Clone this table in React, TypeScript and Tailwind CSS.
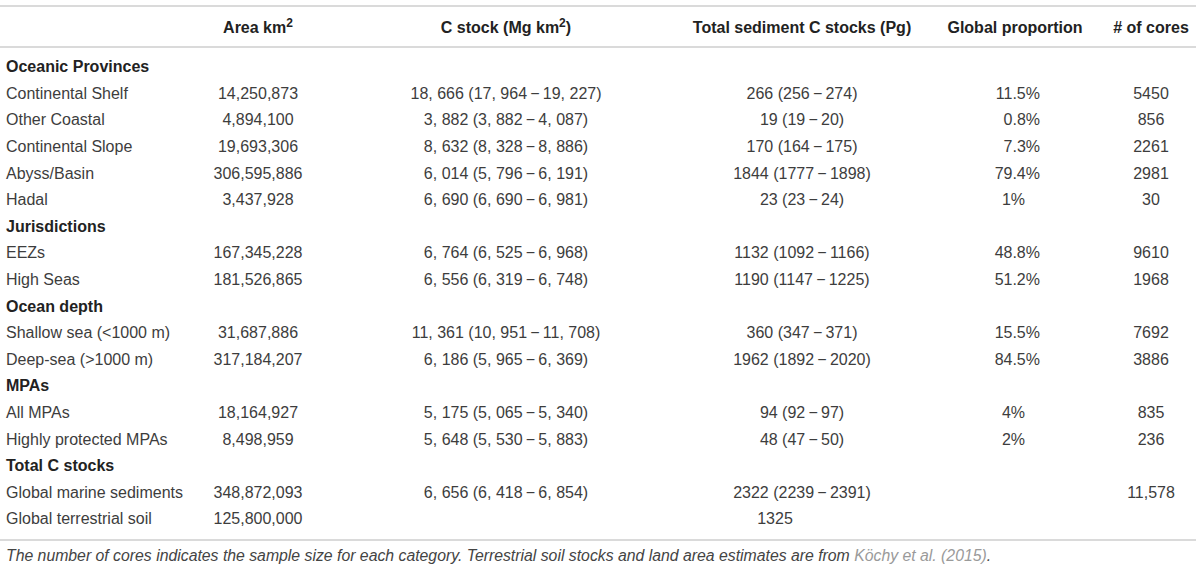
import React from 'react';

type Row = {
  label: string;
  area?: string;
  stock?: string;
  total?: string;
  share?: string;
  cores?: string;
  shareNarrow?: boolean;
  totalShift?: boolean;
};

type Section = { title: string; rows: Row[] };

const d = '\u2009\u2212\u2009';

const sections: Section[] = [
  {
    title: 'Oceanic Provinces',
    rows: [
      { label: 'Continental Shelf', area: '14,250,873', stock: `18, 666 (17, 964${d}19, 227)`, total: `266 (256${d}274)`, share: '11.5%', cores: '5450' },
      { label: 'Other Coastal', area: '4,894,100', stock: `3, 882 (3, 882${d}4, 087)`, total: `19 (19${d}20)`, share: '0.8%', cores: '856' },
      { label: 'Continental Slope', area: '19,693,306', stock: `8, 632 (8, 328${d}8, 886)`, total: `170 (164${d}175)`, share: '7.3%', cores: '2261' },
      { label: 'Abyss/Basin', area: '306,595,886', stock: `6, 014 (5, 796${d}6, 191)`, total: `1844 (1777${d}1898)`, share: '79.4%', cores: '2981' },
      { label: 'Hadal', area: '3,437,928', stock: `6, 690 (6, 690${d}6, 981)`, total: `23 (23${d}24)`, share: '1%', cores: '30', shareNarrow: true },
    ],
  },
  {
    title: 'Jurisdictions',
    rows: [
      { label: 'EEZs', area: '167,345,228', stock: `6, 764 (6, 525${d}6, 968)`, total: `1132 (1092${d}1166)`, share: '48.8%', cores: '9610' },
      { label: 'High Seas', area: '181,526,865', stock: `6, 556 (6, 319${d}6, 748)`, total: `1190 (1147${d}1225)`, share: '51.2%', cores: '1968' },
    ],
  },
  {
    title: 'Ocean depth',
    rows: [
      { label: 'Shallow sea (<1000 m)', area: '31,687,886', stock: `11, 361 (10, 951${d}11, 708)`, total: `360 (347${d}371)`, share: '15.5%', cores: '7692' },
      { label: 'Deep-sea (>1000 m)', area: '317,184,207', stock: `6, 186 (5, 965${d}6, 369)`, total: `1962 (1892${d}2020)`, share: '84.5%', cores: '3886' },
    ],
  },
  {
    title: 'MPAs',
    rows: [
      { label: 'All MPAs', area: '18,164,927', stock: `5, 175 (5, 065${d}5, 340)`, total: `94 (92${d}97)`, share: '4%', cores: '835', shareNarrow: true },
      { label: 'Highly protected MPAs', area: '8,498,959', stock: `5, 648 (5, 530${d}5, 883)`, total: `48 (47${d}50)`, share: '2%', cores: '236', shareNarrow: true },
    ],
  },
  {
    title: 'Total C stocks',
    rows: [
      { label: 'Global marine sediments', area: '348,872,093', stock: `6, 656 (6, 418${d}6, 854)`, total: `2322 (2239${d}2391)`, cores: '11,578' },
      { label: 'Global terrestrial soil', area: '125,800,000', total: '1325', totalShift: true },
    ],
  },
];

const grid = 'grid grid-cols-[180px_156px_340px_252px_174px_98px] items-center';

export default function App() {
  return (
    <div
      className="w-[1200px] h-[571px] bg-white text-[#3d3d3d] overflow-hidden"
      style={{ fontFamily: '"Liberation Sans", Arial, sans-serif' }}
    >
      <div className="pt-[5px]">
        <div className="border-t-2 border-b-2 border-[#dadada] w-[1196px]">
          {/* header */}
          <div className={`${grid} h-[39px] pt-[3px] text-[16px] font-bold text-[#222]`}>
            <div />
            <div className="text-center">
              Area km<sup className="text-[12px]">2</sup>
            </div>
            <div className="text-center">
              C stock (Mg km<sup className="text-[12px]">2</sup>)
            </div>
            <div className="text-center">Total sediment C stocks (Pg)</div>
            <div className="text-center">Global proportion</div>
            <div className="text-center">&#35; of cores</div>
          </div>
        </div>

        {/* body */}
        <div className="pt-[6px] pb-[6px] border-b-2 border-[#dadada] w-[1196px] text-[16px]">
          {sections.map((s) => (
            <React.Fragment key={s.title}>
              <div className="h-[26.6px] flex items-center pl-[6px] font-bold text-[#222]">{s.title}</div>
              {s.rows.map((r) => (
                <div key={r.label} className={`${grid} h-[26.6px]`}>
                  <div className="pl-[6px] whitespace-nowrap">{r.label}</div>
                  <div className="text-center">{r.area}</div>
                  <div className="text-center whitespace-nowrap">{r.stock}</div>
                  <div className={`text-center whitespace-nowrap ${r.totalShift ? 'pr-[54px]' : ''}`}>{r.total}</div>
                  <div className={`text-right ${r.shareNarrow ? 'pr-[77px]' : 'pr-[62px]'}`}>{r.share}</div>
                  <div className="text-center">{r.cores}</div>
                </div>
              ))}
            </React.Fragment>
          ))}
        </div>

        {/* footnote */}
        <p className="pl-[6px] pt-[3px] text-[15.8px] italic text-[#444] whitespace-nowrap">
          The number of cores indicates the sample size for each category. Terrestrial soil stocks and land area
          estimates are from <span className="text-[#9a9a9a]">Köchy et al. (2015)</span>.
        </p>
      </div>
    </div>
  );
}
